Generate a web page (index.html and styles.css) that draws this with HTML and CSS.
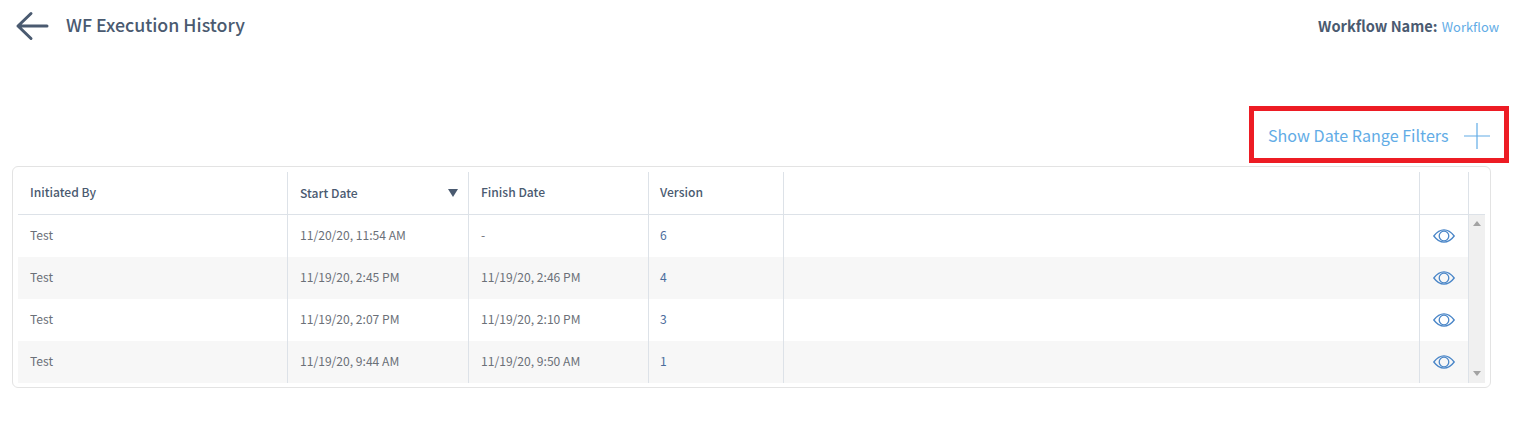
FILE: index.html
```html
<!DOCTYPE html>
<html lang="en">
<head>
    <meta charset="UTF-8">
    <title>WF Execution History</title>
    <link rel="stylesheet" href="styles.css">
</head>
<body>
    <div class="top-bar">
        <div class="title-group">
            <svg class="back-icon" width="34" height="30" viewBox="0 0 34 30">
                <path d="M32 15H3M3 15L16 2.5M3 15L16 27.5" fill="none" stroke="#4a5a70" stroke-width="3" stroke-linecap="round" stroke-linejoin="round"/>
            </svg>
            <h1>WF Execution History</h1>
        </div>
        <div class="workflow-name"><strong>Workflow Name:</strong> <a>Workflow</a></div>
    </div>

    <div class="filter-row">
        <div class="filter-toggle">
            <span>Show Date Range Filters</span>
            <svg width="26" height="26" viewBox="0 0 26 26">
                <path d="M0 13H26M13 0V26" stroke="#62ace6" stroke-width="1.2" fill="none"/>
            </svg>
        </div>
    </div>

    <div class="card">
        <div class="row head">
            <div class="cell">Initiated By</div>
            <div class="cell sorted">Start Date<span class="sort-arrow"></span></div>
            <div class="cell">Finish Date</div>
            <div class="cell version-head">Version</div>
            <div class="cell"></div>
            <div class="cell"></div>
        </div>
        <div class="body">
            <div class="rows">
                <div class="row">
                    <div class="cell">Test</div>
                    <div class="cell">11/20/20, 11:54 AM</div>
                    <div class="cell">-</div>
                    <div class="cell version">6</div>
                    <div class="cell"></div>
                    <div class="cell action"><svg width="22" height="14" viewBox="0 0 22 14"><path d="M0.8 7C4 2.800 7.200 0.800 11 0.800s7 2 10.200 6.200c-3.200 4.200-6.400 6.200-10.200 6.200S4 11.200 0.800 7z" fill="none" stroke="#4a86c8" stroke-width="1.300"/><circle cx="11" cy="7" r="4.800" fill="none" stroke="#4a86c8" stroke-width="1.300"/></svg></div>
                </div>
                <div class="row">
                    <div class="cell">Test</div>
                    <div class="cell">11/19/20, 2:45 PM</div>
                    <div class="cell">11/19/20, 2:46 PM</div>
                    <div class="cell version">4</div>
                    <div class="cell"></div>
                    <div class="cell action"><svg width="22" height="14" viewBox="0 0 22 14"><path d="M0.8 7C4 2.800 7.200 0.800 11 0.800s7 2 10.200 6.200c-3.200 4.200-6.400 6.200-10.200 6.200S4 11.200 0.800 7z" fill="none" stroke="#4a86c8" stroke-width="1.300"/><circle cx="11" cy="7" r="4.800" fill="none" stroke="#4a86c8" stroke-width="1.300"/></svg></div>
                </div>
                <div class="row">
                    <div class="cell">Test</div>
                    <div class="cell">11/19/20, 2:07 PM</div>
                    <div class="cell">11/19/20, 2:10 PM</div>
                    <div class="cell version">3</div>
                    <div class="cell"></div>
                    <div class="cell action"><svg width="22" height="14" viewBox="0 0 22 14"><path d="M0.8 7C4 2.800 7.200 0.800 11 0.800s7 2 10.200 6.200c-3.200 4.200-6.400 6.200-10.200 6.200S4 11.200 0.800 7z" fill="none" stroke="#4a86c8" stroke-width="1.300"/><circle cx="11" cy="7" r="4.800" fill="none" stroke="#4a86c8" stroke-width="1.300"/></svg></div>
                </div>
                <div class="row">
                    <div class="cell">Test</div>
                    <div class="cell">11/19/20, 9:44 AM</div>
                    <div class="cell">11/19/20, 9:50 AM</div>
                    <div class="cell version">1</div>
                    <div class="cell"></div>
                    <div class="cell action"><svg width="22" height="14" viewBox="0 0 22 14"><path d="M0.8 7C4 2.800 7.200 0.800 11 0.800s7 2 10.200 6.200c-3.200 4.200-6.400 6.200-10.200 6.200S4 11.200 0.800 7z" fill="none" stroke="#4a86c8" stroke-width="1.300"/><circle cx="11" cy="7" r="4.800" fill="none" stroke="#4a86c8" stroke-width="1.300"/></svg></div>
                </div>
            </div>
            <div class="scrollbar">
                <span class="arrow-up"></span>
                <span class="arrow-down"></span>
            </div>
        </div>
    </div>
</body>
</html>
```

FILE: styles.css
```css
body {
    margin: 0;
    background: white;
    font-family: "Noto Sans CJK JP", "Source Sans Pro", sans-serif;
    color: #4a5a70;
}

.top-bar {
    display: flex;
    justify-content: space-between;
    padding: 11px 19px 0 15px;
    height: 106px;
    box-sizing: border-box;
}

.title-group {
    display: flex;
    align-items: flex-start;
    gap: 17px;
}

h1 {
    margin: -1px 0 0;
    font-size: 17.8px;
    line-height: 28px;
    font-weight: 500;
    color: #4a5a70;
}

.workflow-name {
    font-size: 14.6px;
    line-height: 30px;
}

.workflow-name strong {
    font-weight: 700;
}

.workflow-name a {
    font-size: 12.9px;
    color: #62ace6;
    margin-left: 1px;
}

.filter-row {
    display: flex;
    justify-content: flex-end;
    padding-right: 9px;
}

.filter-toggle {
    display: flex;
    align-items: center;
    justify-content: space-between;
    width: 260px;
    height: 57px;
    box-sizing: border-box;
    padding: 3px 14px 0 14px;
    border: 5px solid #ed1c24;
    color: #62ace6;
    font-size: 16.1px;
}

.filter-toggle span {
    margin-top: -2px;
}

.card {
    width: 1479px;
    height: 222px;
    box-sizing: border-box;
    margin: 3px 0 0 12px;
    padding: 5px;
    border: 1px solid #e3e3e3;
    border-radius: 6px;
}

.row {
    display: grid;
    grid-template-columns: 270px 181px 180px 135px 636px 49px;
    height: 42px;
    font-size: 12.1px;
}

.rows .row:nth-child(even) {
    background: #f7f7f7;
}

.head {
    height: 43px;
    border-bottom: 1px solid #dde2e8;
    box-sizing: border-box;
    font-weight: 500;
}

.cell {
    display: flex;
    align-items: center;
    padding-left: 12px;
    padding-bottom: 3px;
    border-right: 1px solid #dde2e8;
    color: #6b7078;
}

.head .cell {
    color: #4a5a70;
}

.row .cell:last-child {
    padding-left: 0;
    justify-content: center;
}

.version, .row .version-head {
    padding-left: 11px;
}

.version {
    color: #4a6c9c;
}

.sorted {
    justify-content: space-between;
    padding-right: 10px;
    padding-bottom: 1px;
}

.sort-arrow {
    width: 0;
    height: 0;
    border-left: 5.5px solid transparent;
    border-right: 5.5px solid transparent;
    border-top: 8px solid #4a5a70;
}

.row .action {
    padding-bottom: 0;
}

.body {
    display: flex;
}

.rows {
    width: 1451px;
}

.scrollbar {
    width: 17px;
    background: #f0f0f0;
    display: flex;
    flex-direction: column;
    justify-content: space-between;
    align-items: center;
    padding: 6px 0 7px;
    box-sizing: border-box;
}

.arrow-up {
    border-left: 4px solid transparent;
    border-right: 4px solid transparent;
    border-bottom: 5px solid #a3a3a3;
}

.arrow-down {
    border-left: 4px solid transparent;
    border-right: 4px solid transparent;
    border-top: 5px solid #a3a3a3;
}
```
